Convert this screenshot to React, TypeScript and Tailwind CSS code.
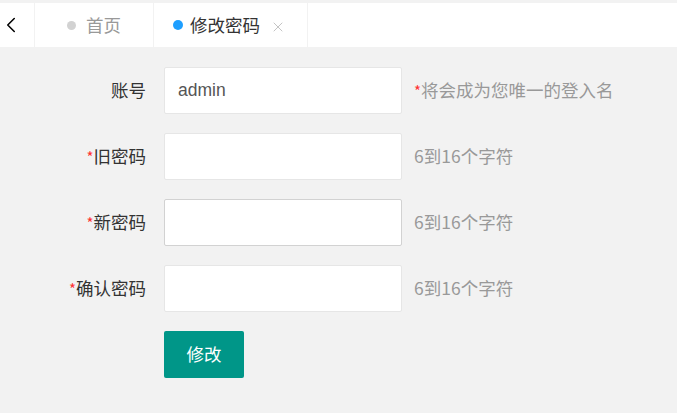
import { ChevronLeft, X } from 'lucide-react'

const font = { fontFamily: '"Noto Sans CJK SC", "Liberation Sans", sans-serif' }

const rows = [
  { label: '账号', required: false, value: 'admin', hint: '将会成为您唯一的登入名', hintRequired: true, hover: false },
  { label: '旧密码', required: true, value: '', hint: '6到16个字符', hintRequired: false, hover: false },
  { label: '新密码', required: true, value: '', hint: '6到16个字符', hintRequired: false, hover: true },
  { label: '确认密码', required: true, value: '', hint: '6到16个字符', hintRequired: false, hover: false },
]

export default function App() {
  return (
    <div className="w-[677px] h-[413px] bg-[#f2f2f2] flex flex-col overflow-hidden" style={font}>
      {/* Tab bar */}
      <div className="mt-[3px] h-[44px] bg-white flex items-stretch flex-shrink-0">
        <div className="w-[35px] flex items-center justify-center border-r border-[#f2f2f2]">
          <ChevronLeft className="w-[26px] h-[26px] text-black -ml-[12px]" strokeWidth={1.4} />
        </div>
        <div className="w-[119px] flex items-center pl-[32px] border-r border-[#f2f2f2]">
          <span className="w-[9px] h-[9px] rounded-full bg-[#d2d2d2]" />
          <span className="ml-[10px] text-[17.5px] text-[#999]">首页</span>
        </div>
        <div className="w-[154px] flex items-center pl-[19px] border-r border-[#f2f2f2]">
          <span className="w-[10px] h-[10px] rounded-full bg-[#1e9fff]" />
          <span className="ml-[7px] text-[17.5px] text-[#333]">修改密码</span>
          <X className="ml-[10px] mt-[3px] w-[16px] h-[16px] text-[#bbb]" strokeWidth={1.3} />
        </div>
        <div className="flex-1" />
      </div>

      {/* Form */}
      <div className="pt-[20px] flex flex-col gap-[20px]">
        {rows.map((row) => (
          <div key={row.label} className="flex items-center h-[46px]">
            <label className="w-[146px] text-right text-[17.5px] text-[#333]">
              {row.required && <span className="text-[15px] text-[#ff3333]">*</span>}
              {row.label}
            </label>
            <div
              className={`ml-[18px] w-[238px] h-[47px] bg-white rounded-[2px] border flex items-center pl-[13px] text-[17.5px] text-[#555] ${
                row.hover ? 'border-[#d2d2d2]' : 'border-[#e6e6e6]'
              }`}
              style={{ fontFamily: '"Liberation Sans", "Noto Sans CJK SC", sans-serif' }}
            >
              {row.value}
            </div>
            <span className="ml-[12px] text-[17.5px] text-[#999]">
              {row.hintRequired && <span className="text-[15px] text-[#ff3333]">*</span>}
              {row.hint}
            </span>
          </div>
        ))}
        <div className="pl-[164px]">
          <button className="w-[80px] h-[47px] bg-[#009688] rounded-[2px] text-white text-[17.5px]">修改</button>
        </div>
      </div>
    </div>
  )
}
